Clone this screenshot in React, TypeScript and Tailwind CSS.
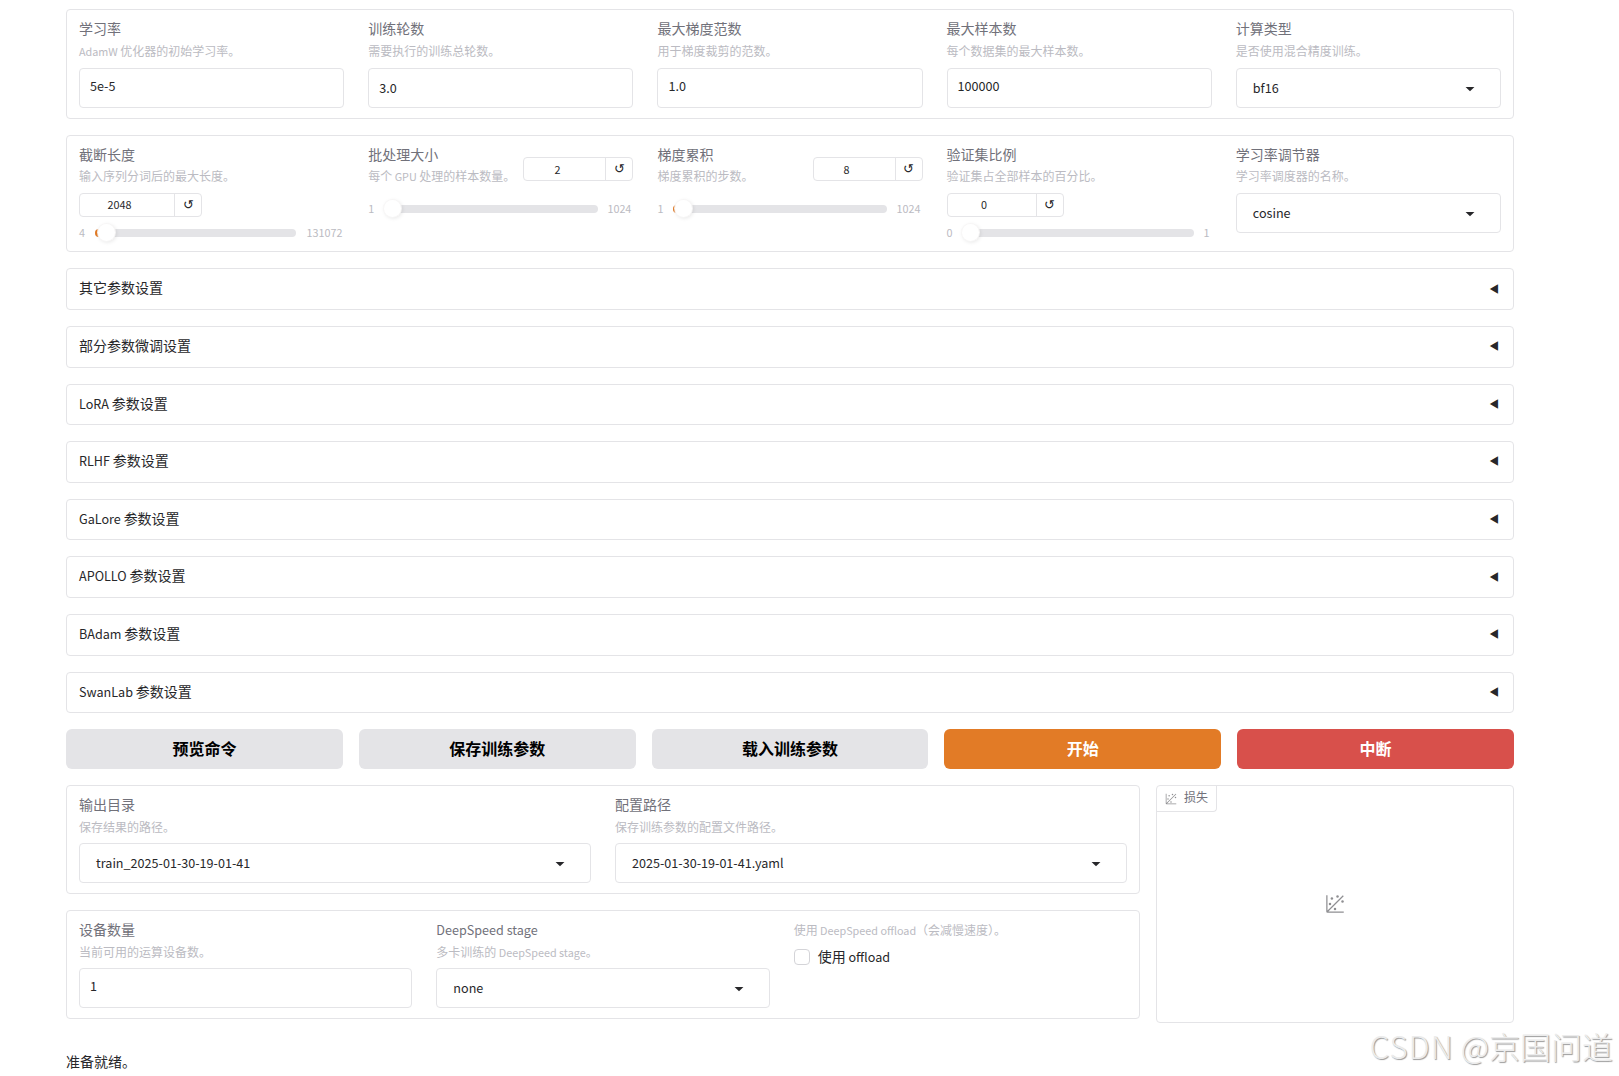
import React from 'react';

interface FieldHeaderProps {
  label?: string;
  info: string;
}

interface FieldProps {
  label: string;
  info: string;
  value: string;
}

interface SliderFieldProps extends FieldProps {
  min: string;
  max: string;
  inline?: boolean;
  offset?: number;
  boxClass: string;
  numberClass: string;
  trackClass: string;
}

const accordions = [
  '其它参数设置',
  '部分参数微调设置',
  'LoRA 参数设置',
  'RLHF 参数设置',
  'GaLore 参数设置',
  'APOLLO 参数设置',
  'BAdam 参数设置',
  'SwanLab 参数设置',
];

const buttons = [
  { text: '预览命令', className: 'bg-[#e4e4e7] text-black' },
  { text: '保存训练参数', className: 'bg-[#e4e4e7] text-black' },
  { text: '载入训练参数', className: 'bg-[#e4e4e7] text-black' },
  { text: '开始', className: 'bg-[#e27b26] text-white' },
  { text: '中断', className: 'bg-[#d8504b] text-white' },
];

// Latin runs are set slightly smaller than the Chinese text around them
const Mixed: React.FC<{ text: string }> = ({ text }) => (
  <span className="whitespace-pre">
    {text
      .split(/([\x20-\x7e]+)/)
      .filter(Boolean)
      .map((part, index) =>
        /^[\x20-\x7e]+$/.test(part) ? (
          <span key={index} className="text-[0.9em]">
            {part}
          </span>
        ) : (
          part
        )
      )}
  </span>
);

const PlotIcon: React.FC<{ className: string }> = ({ className }) => (
  <svg className={className} viewBox="0 0 32 32" fill="currentColor">
    <circle cx="20" cy="4" r="2" />
    <circle cx="8" cy="16" r="2" />
    <circle cx="28" cy="12" r="2" />
    <circle cx="11" cy="7" r="2" />
    <circle cx="16" cy="24" r="2" />
    <path d="M30 3.413L28.586 2L4 26.585V2H2v26a2 2 0 0 0 2 2h26v-2H5.413Z" />
  </svg>
);

const FieldHeader: React.FC<FieldHeaderProps> = ({ label, info }) => (
  <div>
    {label && (
      <div className="h-[22.6px] text-[14px] leading-[19.6px] text-[#71717a]">
        <Mixed text={label} />
      </div>
    )}
    <div className="h-[18px] text-[12px] leading-[18px] text-[#bbbbc2]">
      <Mixed text={info} />
    </div>
  </div>
);

const TextField: React.FC<FieldProps & { textClass?: string }> = ({ label, info, value, textClass = 'pb-1' }) => (
  <div className="min-w-0 flex-1">
    <FieldHeader label={label} info={info} />
    <div className={`mt-[7.6px] flex h-[40px] items-center rounded border border-[#e4e4e7] px-[10px] ${textClass}`}>
      <Mixed text={value} />
    </div>
  </div>
);

const SelectField: React.FC<FieldProps> = ({ label, info, value }) => (
  <div className="min-w-0 flex-1">
    <FieldHeader label={label} info={info} />
    <div className="mt-[7.6px] flex h-[40px] items-center justify-between rounded border border-[#e4e4e7] pr-5 pl-4">
      <Mixed text={value} />
      <svg className="h-5 w-5" viewBox="0 0 18 18" fill="currentColor">
        <path d="M5 8l4 4 4-4z" />
      </svg>
    </div>
  </div>
);

const SliderField: React.FC<SliderFieldProps> = ({
  label,
  info,
  value,
  min,
  max,
  inline = false,
  offset = 0,
  boxClass,
  numberClass,
  trackClass,
}) => (
  <div className="min-w-0 flex-1">
    <div className={inline ? 'flex justify-between' : ''}>
      <FieldHeader label={label} info={info} />
      <div
        className={`flex h-6 rounded border border-[#e4e4e7] text-[12px] ${
          inline ? 'mt-[12.4px] leading-[22px]' : 'mt-[8px] leading-[20px]'
        } ${boxClass}`}
      >
        <span className={`border-r border-[#e4e4e7] text-center ${numberClass}`}>
          <Mixed text={value} />
        </span>
        <span className="flex-1 text-center text-[13px] leading-[20px]">↺</span>
      </div>
    </div>
    <div className={`flex h-4 items-center text-[12px] leading-4 text-[#bbbbc2] ${inline ? 'mt-4' : 'mt-2'}`}>
      <span className="pb-[2px]">
        <Mixed text={min} />
      </span>
      <div className={`relative h-2 shrink-0 rounded-full bg-[#e4e4e7] ${trackClass}`}>
        {offset > 0 && <div className="absolute top-0 left-0 h-2 w-3 rounded-full bg-[#e27b26]" />}
        <div
          className="absolute -top-[5px] h-[17px] w-[17px] rounded-full bg-white shadow-[0_0_0_1px_rgba(247,246,246,0.9),1px_1px_4px_rgba(0,0,0,0.12)]"
          style={{ left: `${offset}px` }}
        />
      </div>
      <span className="pb-[2px]">
        <Mixed text={max} />
      </span>
    </div>
  </div>
);

const App: React.FC = () => {
  return (
    <div className="relative h-[1076px] w-full overflow-hidden bg-white pt-[9px] pr-[105px] pl-[66px] font-['Noto_Sans_CJK_SC',sans-serif] text-[14px] leading-[19.6px] text-[#27272a]">
      <div className="flex flex-col gap-4">
        <section className="flex h-[110px] gap-6 rounded border border-[#e4e4e7] px-3 pt-[9.4px]">
          <TextField label="学习率" info="AdamW 优化器的初始学习率。" value="5e-5" />
          <TextField label="训练轮数" info="需要执行的训练总轮数。" value="3.0" textClass="pt-px" />
          <TextField label="最大梯度范数" info="用于梯度裁剪的范数。" value="1.0" />
          <TextField label="最大样本数" info="每个数据集的最大样本数。" value="100000" />
          <SelectField label="计算类型" info="是否使用混合精度训练。" value="bf16" />
        </section>

        <section className="flex h-[117.4px] gap-6 rounded border border-[#e4e4e7] px-3 pt-[8.5px]">
          <SliderField
            label="截断长度"
            info="输入序列分词后的最大长度。"
            value="2048"
            min="4"
            max="131072"
            offset={3}
            boxClass="w-[123px]"
            numberClass="w-[95px] pr-[15px]"
            trackClass="ml-[10px] mr-[10.5px] w-[201px]"
          />
          <SliderField
            label="批处理大小"
            info="每个 GPU 处理的样本数量。"
            value="2"
            min="1"
            max="1024"
            inline
            boxClass="w-[110px]"
            numberClass="w-[82px] pr-[15px]"
            trackClass="ml-[9.6px] mr-[9.6px] w-[214px]"
          />
          <SliderField
            label="梯度累积"
            info="梯度累积的步数。"
            value="8"
            min="1"
            max="1024"
            inline
            offset={1.6}
            boxClass="w-[110px]"
            numberClass="w-[82px] pr-[15px]"
            trackClass="ml-[9.6px] mr-[9.6px] w-[214px]"
          />
          <SliderField
            label="验证集比例"
            info="验证集占全部样本的百分比。"
            value="0"
            min="0"
            max="1"
            boxClass="w-[117px]"
            numberClass="w-[89px] pr-[15px]"
            trackClass="ml-[9px] mr-[10px] w-[232px]"
          />
          <SelectField label="学习率调节器" info="学习率调度器的名称。" value="cosine" />
        </section>

        {accordions.map((title) => (
          <section
            key={title}
            className="flex h-[41.6px] items-center justify-between rounded border border-[#e4e4e7] pr-[14px] pl-3"
          >
            <span className="pb-[2px]">
              <Mixed text={title} />
            </span>
            <span className="-mt-px rotate-90 text-[10px] leading-[14px]">▼</span>
          </section>
        ))}

        <div className="flex gap-4">
          {buttons.map((button) => (
            <button
              key={button.text}
              className={`h-10 flex-1 rounded-md pb-[2px] text-[16px] leading-6 font-bold ${button.className}`}
            >
              {button.text}
            </button>
          ))}
        </div>

        <div className="flex items-start gap-4">
          <div className="flex w-[1074px] flex-col gap-4">
            <section className="flex h-[109px] gap-6 rounded border border-[#e4e4e7] px-3 pt-[8.9px]">
              <SelectField label="输出目录" info="保存结果的路径。" value="train_2025-01-30-19-01-41" />
              <SelectField label="配置路径" info="保存训练参数的配置文件路径。" value="2025-01-30-19-01-41.yaml" />
            </section>

            <section className="flex h-[109px] gap-6 rounded border border-[#e4e4e7] px-3 pt-[8.9px]">
              <TextField label="设备数量" info="当前可用的运算设备数。" value="1" />
              <SelectField label="DeepSpeed stage" info="多卡训练的 DeepSpeed stage。" value="none" />
              <div className="min-w-0 flex-1 pt-px">
                <FieldHeader info="使用 DeepSpeed offload（会减慢速度）。" />
                <label className="mt-[7.6px] flex items-center gap-2">
                  <span className="h-4 w-4 rounded border border-[#d4d4d8]" />
                  <span className="pb-px">
                    <Mixed text="使用 offload" />
                  </span>
                </label>
              </div>
            </section>
          </div>

          <section className="relative flex h-[238px] flex-1 items-center justify-center rounded border border-[#e4e4e7]">
            <div className="absolute top-0 left-0 flex h-[26px] items-center rounded-br border-r border-b border-[#e4e4e7] px-2 text-[12px] text-[#71717a]">
              <PlotIcon className="mr-[7px] h-3 w-3 text-[#8f8f92]" />
              <span className="pb-[3px]">损失</span>
            </div>
            <PlotIcon className="h-5 w-5 text-[#8f8f92]" />
          </section>
        </div>

        <p className="mt-[13px]">准备就绪。</p>
      </div>

      <div className="absolute right-[6px] bottom-[8px] text-[31px] leading-[44px] font-light whitespace-nowrap text-[#ececec] [text-shadow:1px_1px_1px_#999]">
        <span className="tracking-[1.2px]">CSDN</span> @京国问道
      </div>
    </div>
  );
};

export default App;
